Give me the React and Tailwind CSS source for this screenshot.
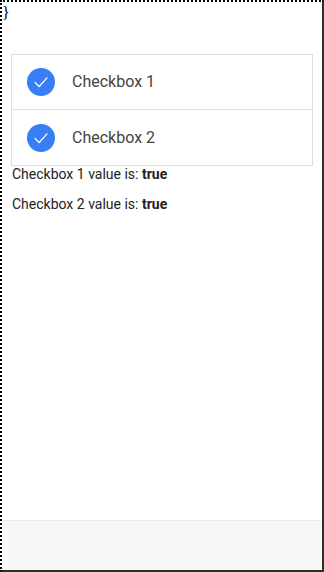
import React from "react";

function Check() {
  return (
    <div className="w-[28px] h-[28px] rounded-full bg-[#387ef5] shrink-0">
      <svg width="28" height="28" viewBox="0 0 28 28" fill="none">
        <path d="M8 14.5 L12.2 18.5 L20 9.8" stroke="white" strokeWidth="1.2" strokeLinecap="round" strokeLinejoin="round" />
      </svg>
    </div>
  );
}

function Row({ label, last }) {
  return (
    <div className={"flex items-center h-[55px] pl-[15px] " + (last ? "" : "border-b border-[#dddddd]")}>
      <Check />
      <span className="ml-[17px] text-[16px] text-[#444444]">{label}</span>
    </div>
  );
}

export default function App() {
  return (
    <div
      className="relative w-[324px] h-[572px] overflow-hidden bg-white flex flex-col border-2 border-dotted border-l-black border-t-black [border-right-style:solid] [border-bottom-style:solid] border-r-[#2e2e2e] border-b-[#2e2e2e]"
      style={{ fontFamily: "Roboto, 'Noto Sans', sans-serif" }}
    >
      <span className="absolute left-0 top-[3px] text-[16px] leading-none text-black" style={{ fontFamily: "'Liberation Serif', serif" }}>
        {"}"}
      </span>
      <div className="flex-1 pt-[52px] px-[9px]">
        <div className="border border-[#dddddd] bg-white">
          <Row label="Checkbox 1" />
          <Row label="Checkbox 2" last />
        </div>
        <p className="text-[14px] leading-[20px] text-[#222222] pl-px -mt-[2px]">
          Checkbox 1 value is: <b>true</b>
        </p>
        <p className="text-[14px] leading-[20px] text-[#222222] mt-[10px] pl-px">
          Checkbox 2 value is: <b>true</b>
        </p>
      </div>
      <div className="h-[50px] bg-[#f7f7f7] border-t border-[#ececec]" />
    </div>
  );
}
